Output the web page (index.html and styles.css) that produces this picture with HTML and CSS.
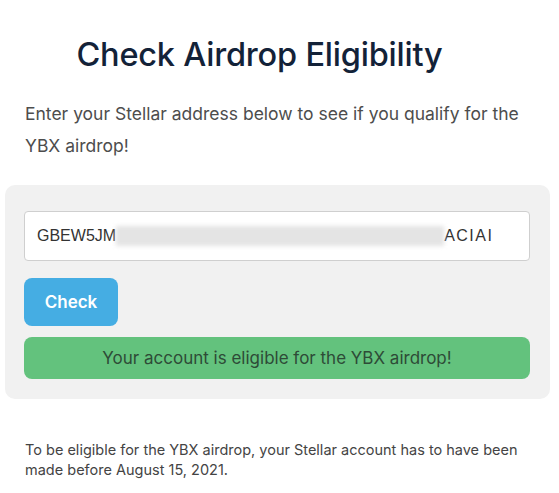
FILE: index.html
```html
<!DOCTYPE html>
<html>
<head>
<meta charset="utf-8">
<link rel="stylesheet" href="styles.css">
</head>
<body>
<main class="page">
  <h1 class="title">Check Airdrop Eligibility</h1>
  <p class="intro">Enter your Stellar address below to see if you qualify for the YBX airdrop!</p>
  <section class="panel">
    <div class="field"><span class="addr">GBEW5JM</span><span class="blur"></span><span class="addr tail">ACIAI</span></div>
    <button class="btn">Check</button>
    <div class="alert">Your account is eligible for the YBX airdrop!</div>
  </section>
  <p class="note">To be eligible for the YBX airdrop, your Stellar account has to have been made before August 15, 2021.</p>
</main>
</body>
</html>
```
FILE: styles.css
```css
html, body { margin: 0; padding: 0; background: #fff; }
body { font-family: Inter, "Noto Sans", sans-serif; }
.page { width: 559px; padding: 0 9px 0 5px; box-sizing: border-box; display: flex; flex-direction: column; }
.title { margin: 34px 36px 0 0; text-align: center; font-size: 32.5px; font-weight: 500; color: #132238; letter-spacing: -0.2px; line-height: 42px; }
.intro { margin: 22px 0 0; padding: 0 20px; font-size: 17.5px; line-height: 32px; color: #4d4d4d; }
.panel { margin-top: 23px; background: #f1f1f1; border-radius: 10px; padding: 26px 20px 20px 19px; display: flex; flex-direction: column; align-items: flex-start; }
.field { width: 506px; height: 50px; box-sizing: border-box; background: #fff; border: 1px solid #cfcfcf; border-radius: 4px; display: flex; align-items: center; padding: 0 12px; overflow: hidden; white-space: nowrap; font-family: "Liberation Sans", Arial, sans-serif; font-size: 16px; color: #333; }
.blur { display: block; width: 328px; height: 20px; background: #e4e4e4; filter: blur(2px); flex: none; }
.tail { display: block; letter-spacing: 1.5px; flex: none; }
.btn { margin-top: 17px; width: 94px; height: 48px; border: 0; border-radius: 8px; background: #45ade3; color: #fff; font-family: Inter, sans-serif; font-size: 17px; font-weight: 600; cursor: pointer; }
.alert { margin-top: 11px; width: 506px; height: 42px; box-sizing: border-box; border-radius: 8px; background: #63c27d; color: #2e4b37; font-size: 17px; display: flex; align-items: center; justify-content: center; }
.note { margin: 41px 0 0; padding: 0 20px; font-size: 14.5px; line-height: 20px; color: #444; }
```
